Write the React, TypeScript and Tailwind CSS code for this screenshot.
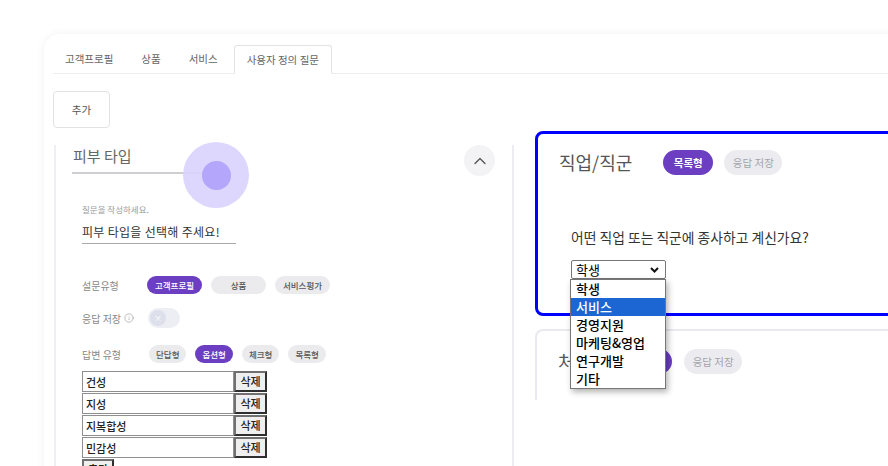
import { ChevronUp, Info } from "lucide-react";

const tabs = ["고객프로필", "상품", "서비스", "사용자 정의 질문"];
const surveyTypes = ["고객프로필", "상품", "서비스평가"];
const answerTypes = ["단답형", "옵션형", "체크형", "목록형"];
const options = ["건성", "지성", "지복합성", "민감성"];
const jobs = ["학생", "서비스", "경영지원", "마케팅&영업", "연구개발", "기타"];

function Pill({ label, active, wide }: { label: string; active?: boolean; wide?: boolean }) {
	return (
		<span
			className={`flex h-[18px] items-center justify-center rounded-full text-[8.5px] font-medium ${
				wide ? "w-[55px]" : "px-[7px]"
			} ${active ? "bg-[#6c3fc2] text-white" : "bg-[#ebebee] text-[#555]"}`}
		>
			{label}
		</span>
	);
}

export default function App() {
	return (
		<div className="h-[466px] w-[888px] overflow-hidden bg-white font-['Noto_Sans_CJK_KR',sans-serif]">
			<div className="pl-[44px] pt-[34px]">
				<div className="min-h-[500px] w-[900px] rounded-tl-2xl bg-white pl-[9px] pt-[11px] shadow-[0_0_10px_rgba(0,0,0,0.06)]">
					{/* tabs */}
					<div className="flex gap-[4px] border-b border-[#ededed]">
						{tabs.map((tab, i) => (
							<div
								key={tab}
								className={`flex h-[28px] items-center px-3 text-[10.5px] text-[#666] ${
									i === 3 ? "-mb-px h-[29px] rounded-t-[3px] border border-[#e3e3e3] border-b-white bg-white" : ""
								}`}
							>
								{tab}
							</div>
						))}
					</div>

					<button className="mt-[17px] flex h-[37px] w-[57px] items-center justify-center rounded-[4px] border border-[#e2e2e2] text-[10.5px] text-[#555]">
						추가
					</button>

					<div className="mt-[17px] flex">
						{/* left column */}
						<div className="relative ml-px min-h-[330px] w-[458px] shrink-0 border-l-2 border-[#efeff3]">
							<div className="flex items-start justify-between pl-[16px] pr-[17px]">
								<div className="h-[29px] w-[155px] border-b-2 border-[#cfcfd3] pl-px text-[15px] leading-[22px] text-[#666]">
									피부 타입
								</div>
								<button className="flex h-[31px] w-[31px] items-center justify-center rounded-full bg-[#f3f3f6]">
									<ChevronUp size={20} strokeWidth={1.6} className="text-[#555]" />
								</button>
							</div>

							<div className="absolute left-[127px] top-[-3px] flex h-[66px] w-[66px] items-center justify-center rounded-full bg-[#d9d1fd]/90">
								<div className="h-[29px] w-[29px] rounded-full bg-[#b3a6fb]" />
							</div>

							<div className="mt-[27px] pl-[26px]">
								<div className="text-[8.5px] leading-[12px] text-[#999]">질문을 작성하세요.</div>
								<div className="mt-[8px] w-[154px] border-b border-[#aaa] pb-[2px] text-[12px] leading-[18px] tracking-[0.3px] text-[#333]">
									피부 타입을 선택해 주세요!
								</div>

								<div className="mt-[32px] flex items-center">
									<span className="w-[65px] text-[10px] text-[#888]">설문유형</span>
									<div className="flex gap-[9px]">
										{surveyTypes.map((t, i) => (
											<Pill key={t} label={t} active={i === 0} wide />
										))}
									</div>
								</div>

								<div className="mt-[14px] flex items-center">
									<span className="flex w-[66px] items-center gap-[3px] text-[10px] text-[#888]">
										응답 저장
										<Info size={10} strokeWidth={1.5} className="text-[#999]" />
									</span>
									<div className="flex h-[20px] w-[32px] items-center rounded-full bg-[#eceef4] px-[2px]">
										<div className="flex h-[16px] w-[16px] items-center justify-center rounded-full bg-[#dde0ea] text-[8px] leading-none text-white">
											×
										</div>
									</div>
								</div>

								<div className="mt-[17px] flex items-center">
									<span className="w-[67px] text-[10px] text-[#888]">답변 유형</span>
									<div className="flex gap-[9px]">
										{answerTypes.map((t, i) => (
											<Pill key={t} label={t} active={i === 1} />
										))}
									</div>
								</div>

								<div className="mt-[8px] flex flex-col gap-px">
									{options.map((o) => (
										<div key={o} className="flex">
											<input
												readOnly
												value={o}
												className="h-[21px] w-[152px] border border-[#8f8f8f] px-[3px] text-[11px] font-medium text-[#222] outline-none"
											/>
											<button className="h-[21px] w-[33px] border-2 border-[#2f2f2f] border-l-[#707070] border-t-[#707070] bg-[#efefef] text-[11px] font-medium text-[#222]">
												삭제
											</button>
										</div>
									))}
									<button className="h-[21px] w-[32px] border-2 border-[#2f2f2f] border-l-[#707070] border-t-[#707070] bg-[#efefef] text-[11px] font-medium text-[#222]">
										추가
									</button>
								</div>
							</div>
						</div>

						{/* right column */}
						<div className="min-h-[330px] flex-1 border-l-2 border-[#ececf1] pl-[21px]">
							<div className="-mt-[14px] h-[185px] w-[420px] rounded-lg border-[3px] border-[#0000ff] pt-[16px]">
								<div className="flex h-[25px] items-center pl-[21px]">
									<span className="text-[18px] text-[#555]">직업/직군</span>
									<span className="ml-[31px] flex h-[25px] w-[50px] items-center justify-center rounded-full bg-[#6c3fc2] text-[10.5px] font-bold text-white">
										목록형
									</span>
									<span className="ml-[11px] flex h-[25px] w-[58px] items-center justify-center rounded-full bg-[#ececf0] text-[10.5px] text-[#a3a3ab]">
										응답 저장
									</span>
								</div>
								<div className="pl-[33px]">
									<div className="mt-[52px] text-[13.8px] leading-[20px] text-[#333]">
										어떤 직업 또는 직군에 종사하고 계신가요?
									</div>
									<div className="relative mt-[13px] flex h-[19px] w-[95px] items-center justify-between rounded-[2px] border border-[#767676] bg-white pl-[4px] pr-[6px] text-[13px] leading-none text-black">
										<span>학생</span>
										<svg width="9" height="6" viewBox="0 0 9 6">
											<path d="M1 1l3.5 3.5L8 1" fill="none" stroke="#111" strokeWidth="2" />
										</svg>
										<div className="absolute left-[-2px] top-[18px] z-10 w-[96px] border border-[#767676] bg-white shadow-[2px_3px_6px_rgba(0,0,0,0.3)]">
											{jobs.map((j, i) => (
												<div
													key={j}
													className={`h-[18px] pl-[5px] text-[13px] font-medium leading-[18px] ${
														i === 1 ? "bg-[#1b66d2] text-white" : "text-black"
													}`}
												>
													{j}
												</div>
											))}
										</div>
									</div>
								</div>
							</div>

							<div className="mt-[13px] h-[71px] w-[420px] rounded-tl-lg border-l-2 border-t-2 border-[#e9e9ef] pl-[21px] pt-[18px]">
								<div className="flex h-[25px] items-center">
									<span className="text-[18px] text-[#555]">처음</span>
									<span className="ml-[31px] flex h-[25px] w-[50px] items-center justify-center rounded-full bg-[#6c3fc2] text-[10.5px] font-bold text-white">
										목록형
									</span>
									<span className="ml-[12px] flex h-[25px] w-[58px] items-center justify-center rounded-full bg-[#ececf0] text-[10.5px] text-[#a3a3ab]">
										응답 저장
									</span>
								</div>
							</div>
						</div>
					</div>
				</div>
			</div>
		</div>
	);
}
